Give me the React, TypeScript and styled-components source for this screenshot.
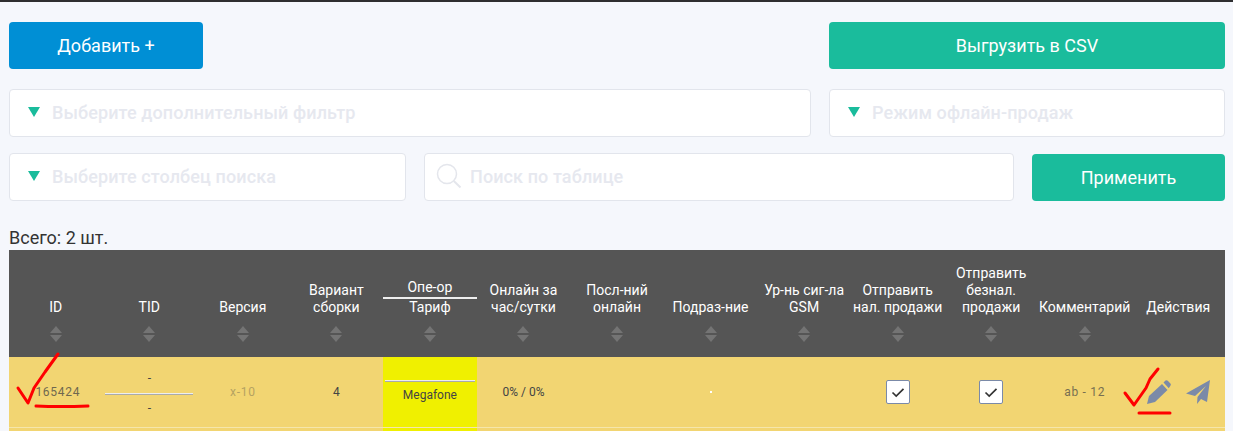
import styled, { createGlobalStyle } from 'styled-components';

const GlobalStyle = createGlobalStyle`
  html, body {
    margin: 0;
    padding: 0;
    height: 431px;
    overflow: hidden;
    background: #f5f7fc;
    font-family: 'Roboto', sans-serif;
  }
`;

const Page = styled.div`
  position: relative;
  height: 431px;
  overflow: hidden;
  box-sizing: border-box;
  border-top: 2px solid #2e2e30;
  padding: 20px 8px 0 9px;
`;

const Row = styled.div<{ $columns: string; $marginBottom: number }>`
  display: grid;
  grid-template-columns: ${props => props.$columns};
  column-gap: 18px;
  margin-bottom: ${props => props.$marginBottom}px;
`;

const Button = styled.button<{ $color: string }>`
  height: 47px;
  border: 0;
  border-radius: 4px;
  padding: 0;
  color: #fff;
  background: ${props => props.$color};
  font-family: 'Roboto', sans-serif;
  font-size: 18px;
  font-weight: 400;
`;

const ApplyButton = styled(Button)`
  align-self: end;
`;

const Field = styled.div`
  height: 48px;
  box-sizing: border-box;
  display: flex;
  align-items: center;
  gap: 12px;
  padding: 0 0 2px 18px;
  background: #fff;
  border: 1px solid #e2e5ec;
  border-radius: 4px;
`;

const SearchField = styled(Field)`
  padding-left: 11px;
  gap: 8px;
`;

const Arrow = styled.span`
  width: 0;
  height: 0;
  border-left: 6px solid transparent;
  border-right: 6px solid transparent;
  border-top: 10px solid #1abc9c;
`;

const Placeholder = styled.span`
  color: #e6e8ef;
  font-size: 18px;
  font-weight: 500;
  letter-spacing: 0.1px;
`;

const Total = styled.div`
  margin: 27px 0 2px;
  height: 20px;
  line-height: 20px;
  font-size: 18px;
  color: #333;
`;

const TableGrid = styled.div`
  display: grid;
  grid-template-columns: repeat(13, 1fr);
`;

const Head = styled(TableGrid)`
  height: 107px;
  background: #555;
`;

const HeadCell = styled.div`
  display: flex;
  flex-direction: column;
  align-items: center;
  justify-content: flex-end;
  padding-bottom: 15px;
  box-sizing: border-box;
  color: #fff;
  font-size: 14px;
  font-weight: 400;
  line-height: 17px;
  text-align: center;
`;

const HeadLabel = styled.div`
  width: 100%;
  white-space: pre-line;
`;

const SplitTop = styled.div`
  border-bottom: 2px solid #eee;
  padding-bottom: 1px;
`;

const Sort = styled.div<{ $hidden?: boolean }>`
  display: flex;
  flex-direction: column;
  gap: 2px;
  height: 16px;
  margin-top: 10px;
  visibility: ${props => (props.$hidden ? 'hidden' : 'visible')};
`;

const SortUp = styled.span`
  width: 0;
  height: 0;
  border-left: 6px solid transparent;
  border-right: 6px solid transparent;
  border-bottom: 7px solid #747474;
`;

const SortDown = styled(SortUp)`
  border-bottom: 0;
  border-top: 7px solid #747474;
`;

const BodyRow = styled(TableGrid)`
  height: 71px;
  box-sizing: border-box;
  background: #f2d572;
  border-bottom: 1px solid #f5e6ab;
`;

const Cell = styled.div`
  display: flex;
  align-items: center;
  justify-content: center;
  color: #444;
  font-size: 12px;
`;

const Smudged = styled.span<{ $opacity: number; $shift?: number }>`
  opacity: ${props => props.$opacity};
  letter-spacing: 0.7px;
  padding-left: ${props => props.$shift ?? 0}px;
`;

const StackCell = styled.div`
  display: flex;
  flex-direction: column;
  align-items: center;
  justify-content: center;
  padding-top: 2px;
  color: #444;
  font-size: 12px;
  line-height: 14px;
`;

const StackLine = styled.div`
  width: 88px;
  height: 1px;
  background: #eee;
  box-shadow: 0 1px 0 #aaa;
  margin: 8px 0 7px;
`;

const OperatorCell = styled.div`
  background: #f0f000;
  display: flex;
  flex-direction: column;
  align-items: center;
  padding-top: 23px;
  color: #444;
  font-size: 12px;
`;

const OperatorLine = styled.div`
  width: 90px;
  height: 1px;
  background: #eee;
  box-shadow: 0 1px 0 #aaa;
  margin-bottom: 7px;
`;

const Dot = styled.span`
  width: 2px;
  height: 2px;
  background: #fff;
`;

const CheckBox = styled.span`
  width: 24px;
  height: 24px;
  box-sizing: border-box;
  display: flex;
  align-items: center;
  justify-content: center;
  background: #fff;
  border: 1px solid #7b8aa8;
  border-radius: 2px;
`;

const Actions = styled.div`
  display: flex;
  align-items: center;
  justify-content: center;
  gap: 15px;
  padding-left: 1px;
`;

const Markup = styled.svg`
  position: absolute;
  left: 0;
  top: -2px;
  pointer-events: none;
`;

const columns = [
  { label: 'ID' },
  { label: 'TID' },
  { label: 'Версия' },
  { label: 'Вариант\nсборки' },
  { label: 'Онлайн за\nчас/сутки' },
  { label: 'Посл-ний\nонлайн' },
  { label: 'Подраз-ние' },
  { label: 'Ур-нь сиг-ла\nGSM' },
  { label: 'Отправить\nнал. продажи' },
  { label: 'Отправить\nбезнал.\nпродажи' },
  { label: 'Комментарий' },
  { label: 'Действия', noSort: true },
];

const SortArrows = ({ hidden }: { hidden?: boolean }) => (
  <Sort $hidden={hidden}>
    <SortUp />
    <SortDown />
  </Sort>
);

const Tick = () => (
  <svg width="14" height="11" viewBox="0 0 14 11" fill="none">
    <path d="M1.5 5.5 L5.2 9 L12.5 1.8" stroke="#333" strokeWidth="1.7" />
  </svg>
);

const SearchIcon = () => (
  <svg width="26" height="26" viewBox="0 0 26 26" fill="none" stroke="#e4e6ec" strokeWidth="1.5">
    <circle cx="11" cy="11" r="9.5" />
    <path d="M17.8 18 L24.5 24.5" strokeWidth="2" />
  </svg>
);

const PencilIcon = () => (
  <svg width="24" height="24" viewBox="0 0 24 24" fill="#7b8aa8">
    <path d="M0 24 L2 16 L15 4 L20.5 10 L8 22 Z" />
    <path d="M16.5 2.5 L18.5 0.6 Q19.6 -0.2 20.8 0.8 L23.4 3.4 Q24.3 4.6 23.4 5.7 L21.8 8.2 Z" />
  </svg>
);

const SendIcon = () => (
  <svg width="24" height="24" viewBox="0 0 24 24" fill="#7b8aa8">
    <path d="M24 0 L0 13.5 L9 16 L20 6 L11.5 17 L11 24 L15 19 L21 22 Z" />
  </svg>
);

export default function App() {
  return (
    <>
      <GlobalStyle />
      <Page>
        <Row $columns="194px 1fr 396px" $marginBottom={20}>
          <Button $color="#008fd5">Добавить +</Button>
          <span />
          <Button $color="#1abc9c">Выгрузить в CSV</Button>
        </Row>
        <Row $columns="1fr 396px" $marginBottom={16}>
          <Field>
            <Arrow />
            <Placeholder>Выберите дополнительный фильтр</Placeholder>
          </Field>
          <Field>
            <Arrow />
            <Placeholder>Режим офлайн-продаж</Placeholder>
          </Field>
        </Row>
        <Row $columns="397px 1fr 193px" $marginBottom={0}>
          <Field>
            <Arrow />
            <Placeholder>Выберите столбец поиска</Placeholder>
          </Field>
          <SearchField>
            <SearchIcon />
            <Placeholder>Поиск по таблице</Placeholder>
          </SearchField>
          <ApplyButton $color="#1abc9c">Применить</ApplyButton>
        </Row>
        <Total>Всего: 2 шт.</Total>
        <Head>
          {columns.slice(0, 4).map(col => (
            <HeadCell key={col.label}>
              <HeadLabel>{col.label}</HeadLabel>
              <SortArrows />
            </HeadCell>
          ))}
          <HeadCell>
            <HeadLabel>
              <SplitTop>Опе-ор</SplitTop>
              Тариф
            </HeadLabel>
            <SortArrows />
          </HeadCell>
          {columns.slice(4).map(col => (
            <HeadCell key={col.label}>
              <HeadLabel>{col.label}</HeadLabel>
              <SortArrows hidden={col.noSort} />
            </HeadCell>
          ))}
        </Head>
        <BodyRow>
          <Cell><Smudged $opacity={0.75} $shift={4}>165424</Smudged></Cell>
          <StackCell>
            <span>-</span>
            <StackLine />
            <span>-</span>
          </StackCell>
          <Cell><Smudged $opacity={0.35}>x-10</Smudged></Cell>
          <Cell>4</Cell>
          <OperatorCell>
            <OperatorLine />
            Megafone
          </OperatorCell>
          <Cell>0% / 0%</Cell>
          <Cell />
          <Cell><Dot /></Cell>
          <Cell />
          <Cell><CheckBox><Tick /></CheckBox></Cell>
          <Cell><CheckBox><Tick /></CheckBox></Cell>
          <Cell><Smudged $opacity={0.7}>ab - 12</Smudged></Cell>
          <Actions>
            <PencilIcon />
            <SendIcon />
          </Actions>
        </BodyRow>
        <BodyRow>
          <Cell />
          <Cell />
          <Cell />
          <Cell />
          <OperatorCell />
        </BodyRow>
        <Markup width="1233" height="431" viewBox="0 0 1233 431" fill="none" stroke="#f00" strokeWidth="3" strokeLinecap="round" strokeLinejoin="round">
          <path d="M18 388 L28 403 L34 388 L45 372 L58 354" />
          <path d="M36 406 Q60 407 88 406" />
          <path d="M1125 393 L1134 405 L1146 388 L1150 379 L1158 369" />
          <path d="M1139 413 L1170 413" />
        </Markup>
      </Page>
    </>
  );
}
